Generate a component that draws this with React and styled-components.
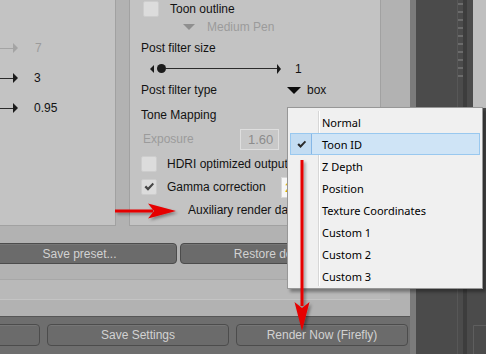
import React from 'react';
import styled, { createGlobalStyle } from 'styled-components';

const GlobalStyle = createGlobalStyle`
  *{
    box-sizing: border-box;
  }
  html, body{
    margin: 0;
    padding: 0;
    background: #4b4b4b;
  }
  body{
    font-family: "Liberation Sans", Arial, sans-serif;
    font-size: 12px;
  }
`;

const Screen = styled.div`
  position: relative;
  display: flex;
  width: 486px;
  height: 354px;
  overflow: hidden;
  background: #4b4b4b;
`;

const Workspace = styled.div`
  display: flex;
  flex-direction: column;
  width: 410px;
  flex-shrink: 0;
`;

const Upper = styled.div`
  display: flex;
  flex-direction: column;
  height: 316px;
  background: #b2b2b2;
`;

const PanelRow = styled.div`
  display: flex;
  align-items: flex-start;
  height: 226px;
`;

const LeftPanel = styled.div`
  width: 116px;
  height: 226px;
  padding-top: 33px;
  background: #c3c3c3;
  border-right: 1px solid #a1a1a1;
  border-bottom: 1px solid #a1a1a1;
`;

const RightPanel = styled.div`
  width: 252px;
  height: 226px;
  margin-left: 13px;
  padding-left: 11px;
  background: #c3c3c3;
  border-left: 1px solid #a1a1a1;
  border-right: 1px solid #a1a1a1;
  border-bottom: 1px solid #a1a1a1;
`;

const Row = styled.div`
  display: flex;
  align-items: center;
  height: ${p => p.$h || 30}px;
  padding-left: ${p => p.$indent || 0}px;
`;

const Label = styled.span`
  flex-shrink: 0;
  white-space: nowrap;
  color: ${p => (p.$muted ? '#9b9b9b' : '#121212')};
  margin-left: ${p => p.$ml || 0}px;
  width: ${p => (p.$w ? `${p.$w}px` : 'auto')};
`;

const Tail = styled.span`
  width: 13px;
  height: 1px;
  background: ${p => (p.$muted ? '#a4a4a4' : '#2a2a2a')};
`;

const ArrowRight = styled.span`
  width: 0;
  height: 0;
  border-left: ${p => p.$w || 5}px solid ${p => (p.$muted ? '#a4a4a4' : '#1a1a1a')};
  border-top: 5px solid transparent;
  border-bottom: 5px solid transparent;
`;

const ArrowLeft = styled.span`
  width: 0;
  height: 0;
  border-right: 4px solid #1a1a1a;
  border-top: 4px solid transparent;
  border-bottom: 4px solid transparent;
`;

const Knob = styled.span`
  width: 9px;
  height: 9px;
  margin-left: 3px;
  border-radius: 50%;
  background: #1c1c1c;
`;

const Track = styled.span`
  width: 111px;
  height: 1px;
  background: #2a2a2a;
`;

const DropTri = styled.span`
  flex-shrink: 0;
  width: 0;
  height: 0;
  margin-left: ${p => p.$ml || 0}px;
  border-top: ${p => p.$h}px solid ${p => (p.$muted ? '#8f8f8f' : '#0c0c0c')};
  border-left: ${p => p.$w / 2}px solid transparent;
  border-right: ${p => p.$w / 2}px solid transparent;
`;

const Check = styled.span`
  display: flex;
  align-items: center;
  justify-content: center;
  flex-shrink: 0;
  width: 16px;
  height: 16px;
  margin-left: ${p => p.$ml || 0}px;
  border-radius: 2px;
  background: #dcdcdc;
  border: 1px solid #cdcdcd;
`;

const NumBox = styled.span`
  flex-shrink: 0;
  display: flex;
  align-items: center;
  width: ${p => p.$w || 39}px;
  height: 21px;
  padding-left: ${p => p.$pl || 7}px;
  background: ${p => (p.$white ? '#f7f7f7' : '#c8c8c8')};
  border: 1px solid ${p => (p.$white ? '#d8d8d8' : '#dedede')};
  color: ${p => (p.$white ? '#d4a800' : '#8c8c8c')};
  font-size: 13px;
`;

const ButtonRow = styled.div`
  display: flex;
  gap: 3px;
  width: 393px;
  margin: 17px 0 0 -18px;
`;

const Button = styled.div`
  flex: ${p => (p.$w ? `0 0 ${p.$w}px` : 1)};
  display: flex;
  align-items: center;
  justify-content: center;
  height: ${p => p.$h || 21}px;
  border-radius: 4px;
  background: #6b6b6b;
  border: 1px solid #4c4c4c;
  box-shadow: inset 0 1px 0 #767676;
  color: #d2d2d2;
  white-space: nowrap;
  overflow: hidden;
`;

const InsetStrip = styled.div`
  width: 390px;
  height: 21px;
  margin-top: 15px;
  background: #b9b9b9;
  border-top: 1px solid #a7a7a7;
  border-bottom: 1px solid #c4c4c4;
`;

const BottomBar = styled.div`
  display: flex;
  gap: 7px;
  height: 38px;
  padding-top: 7px;
  background: #6e6e6e;
  border-top: 1px solid #565656;
  & > :first-child{
    margin-left: -141px;
  }
`;

const Viewport = styled.div`
  display: flex;
  flex: 1;
`;

const ViewEdge = styled.div`
  width: 6px;
  background: #7b7b7b;
`;

const Menu = styled.div`
  position: absolute;
  left: 287px;
  top: 107px;
  width: 196px;
  height: 182px;
  padding: 3px 2px;
  background: #f0f0f0;
  border: 1px solid #979797;
  box-shadow: 3px 3px 3px rgba(0, 0, 0, 0.35);
  font-family: "Noto Sans", "Open Sans", sans-serif;
  font-size: 11px;
  color: #000;
  &::before{
    content: "";
    position: absolute;
    left: 30px;
    top: 3px;
    bottom: 2px;
    width: 1px;
    background: #d7d7d7;
    box-shadow: 1px 0 0 #fff;
  }
`;

const MenuItem = styled.div`
  position: relative;
  display: flex;
  align-items: center;
  height: 22px;
  border: 1px solid ${p => (p.$active ? '#99c8ef' : 'transparent')};
  background: ${p => (p.$active ? '#cfe4f6' : 'transparent')};
`;

const CheckCell = styled.span`
  display: flex;
  align-items: center;
  justify-content: center;
  width: 21px;
  height: 20px;
  border-right: 1px solid ${p => (p.$active ? '#86b7e6' : 'transparent')};
  background: ${p => (p.$active ? '#c3dcf2' : 'transparent')};
`;

const MenuText = styled.span`
  margin-left: 10px;
`;

const Overlay = styled.svg`
  position: absolute;
  left: 0;
  top: 0;
  pointer-events: none;
`;

const Tick = ({ color = '#454545', size = 12 }) => (
  <svg width={size} height={size} viewBox="0 0 12 12">
    <path d="M1.5 6.2 L3.2 4.6 L5 6.6 L9.6 1.8 L11 3.3 L5 9.8 Z" fill={color} />
  </svg>
);

const items = ['Normal', 'Toon ID', 'Z Depth', 'Position', 'Texture Coordinates', 'Custom 1', 'Custom 2', 'Custom 3'];

const ticks = Array.from({ length: 10 }, (_, i) => 3 + i * 8);

export default function App() {
  return (
    <>
      <GlobalStyle />
      <Screen>
        <Workspace>
          <Upper>
            <PanelRow>
              <LeftPanel>
                <Row>
                  <Tail $muted />
                  <ArrowRight $muted />
                  <Label $muted $ml={17}>7</Label>
                </Row>
                <Row>
                  <Tail />
                  <ArrowRight />
                  <Label $ml={16}>3</Label>
                </Row>
                <Row>
                  <Tail />
                  <ArrowRight />
                  <Label $ml={16}>0.95</Label>
                </Row>
              </LeftPanel>
              <RightPanel>
                <Row $h={17}>
                  <Check $ml={2} />
                  <Label $ml={11}>Toon outline</Label>
                </Row>
                <Row $h={20}>
                  <DropTri $muted $w={12} $h={6} $ml={42} />
                  <Label $muted $ml={12}>Medium Pen</Label>
                </Row>
                <Row $h={22}>
                  <Label>Post filter size</Label>
                </Row>
                <Row $h={19} $indent={9}>
                  <ArrowLeft />
                  <Knob />
                  <Track />
                  <ArrowRight $w={4} />
                  <Label $ml={14}>1</Label>
                </Row>
                <Row $h={24}>
                  <Label $w={146}>Post filter type</Label>
                  <DropTri $w={14} $h={7} />
                  <Label $ml={6}>box</Label>
                </Row>
                <Row $h={25}>
                  <Label>Tone Mapping</Label>
                </Row>
                <Row $h={24} $indent={2}>
                  <Label $muted $w={97}>Exposure</Label>
                  <NumBox>1.60</NumBox>
                </Row>
                <Row $h={25}>
                  <Check />
                  <Label $ml={10}>HDRI optimized output</Label>
                </Row>
                <Row $h={22}>
                  <Check>
                    <Tick />
                  </Check>
                  <Label $ml={10} $w={114}>Gamma correction</Label>
                  <NumBox $white $w={60} $pl={3}>2.20</NumBox>
                </Row>
                <Row $h={24} $indent={47}>
                  <Label>Auxiliary render data</Label>
                </Row>
              </RightPanel>
            </PanelRow>
            <ButtonRow>
              <Button>Save preset...</Button>
              <Button>Restore defaults</Button>
            </ButtonRow>
            <InsetStrip />
          </Upper>
          <BottomBar>
            <Button $w={181} $h={22} />
            <Button $w={182} $h={22}>Save Settings</Button>
            <Button $w={172} $h={22}>Render Now (Firefly)</Button>
          </BottomBar>
        </Workspace>
        <Viewport>
          <ViewEdge />
          <svg width="70" height="354" viewBox="0 0 70 354">
            <rect x="0" y="0" width="70" height="354" fill="#4b4b4b" />
            <rect x="41" y="0" width="1" height="354" fill="#575757" />
            <rect x="47" y="0" width="4" height="354" fill="#3d3d3d" />
            {ticks.map(y => (
              <rect key={y} x="42" y={y} width="5" height="2" fill="#6b6b6b" />
            ))}
            <rect x="57" y="0" width="13" height="108" fill="#bfbfbf" />
            <path d="M57.5 354 V325.5 H70" stroke="#5e5e5e" fill="none" />
          </svg>
        </Viewport>

        <Menu>
          {items.map(name => {
            const active = name === 'Toon ID';
            return (
              <MenuItem key={name} $active={active}>
                <CheckCell $active={active}>{active && <Tick color="#2a2a2a" size={11} />}</CheckCell>
                <MenuText>{name}</MenuText>
              </MenuItem>
            );
          })}
        </Menu>

        <Overlay width="486" height="354" viewBox="0 0 486 354">
          <defs>
            <filter id="arrowShadow" x="-20%" y="-20%" width="140%" height="140%">
              <feDropShadow dx="2" dy="2" stdDeviation="1.5" floodColor="#000" floodOpacity="0.35" />
            </filter>
          </defs>
          <g fill="#e60000" filter="url(#arrowShadow)">
            <rect x="115" y="209.5" width="38" height="3" />
            <polygon points="176,211 148,203.5 154,211 148,218.5" />
            <rect x="300.5" y="160" width="3" height="146" />
            <polygon points="302,331 294.5,302 302,308 309.5,302" />
          </g>
        </Overlay>
      </Screen>
    </>
  );
}
